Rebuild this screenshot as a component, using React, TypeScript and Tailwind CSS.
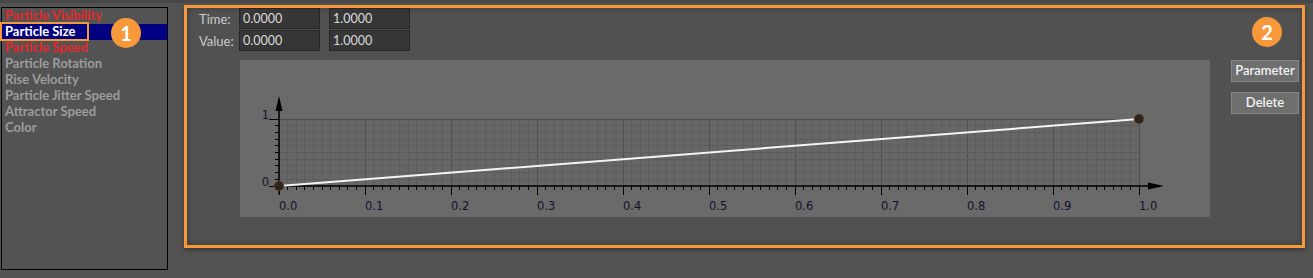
import React from "react";

const LIST_ITEMS = [
  { label: "Particle Visibility", tone: "red" },
  { label: "Particle Size", tone: "selected" },
  { label: "Particle Speed", tone: "red" },
  { label: "Particle Rotation", tone: "gray" },
  { label: "Rise Velocity", tone: "gray" },
  { label: "Particle Jitter Speed", tone: "gray" },
  { label: "Attractor Speed", tone: "gray" },
  { label: "Color", tone: "gray" },
];

const ORIGIN_X = 39;
const ORIGIN_Y = 126;
const PLOT_W = 860;
const PLOT_H = 67;
const MINOR_X = PLOT_W / 100;
const MINOR_Y = PLOT_H / 10;

function CurveChart() {
  const xMinor = Array.from({ length: 101 }, (_, i) => i);
  const yMinor = Array.from({ length: 11 }, (_, j) => j);
  const labels = Array.from({ length: 11 }, (_, i) => (i / 10).toFixed(1));

  return (
    <svg width="970" height="157" viewBox="0 0 970 157" className="block">
      <rect x={ORIGIN_X} y={ORIGIN_Y - PLOT_H} width={PLOT_W} height={PLOT_H} fill="#666666" />
      {xMinor.map((i) => {
        const x = ORIGIN_X + i * MINOR_X;
        return (
          <line
            key={`gx${i}`}
            x1={x}
            x2={x}
            y1={ORIGIN_Y - PLOT_H}
            y2={ORIGIN_Y}
            stroke={i % 10 === 0 ? "#4f4f4f" : "#5c5c5c"}
            strokeWidth="1"
            shapeRendering="crispEdges"
          />
        );
      })}
      {yMinor.map((j) => {
        const y = ORIGIN_Y - j * MINOR_Y;
        return (
          <line
            key={`gy${j}`}
            x1={ORIGIN_X}
            x2={ORIGIN_X + PLOT_W}
            y1={y}
            y2={y}
            stroke={j === 10 ? "#4f4f4f" : "#5c5c5c"}
            strokeWidth="1"
            shapeRendering="crispEdges"
          />
        );
      })}

      {/* x axis + ticks */}
      <line x1={ORIGIN_X} x2={908} y1={ORIGIN_Y} y2={ORIGIN_Y} stroke="#000" strokeWidth="1.5" />
      {xMinor.map((i) => {
        const x = ORIGIN_X + i * MINOR_X;
        return (
          <line
            key={`tx${i}`}
            x1={x}
            x2={x}
            y1={ORIGIN_Y}
            y2={ORIGIN_Y + (i % 10 === 0 ? 9 : 4)}
            stroke="#000"
            strokeWidth="1"
            shapeRendering="crispEdges"
          />
        );
      })}
      <polygon points="908,122.5 924,126 908,129.5" fill="#000" />

      {/* y axis + ticks */}
      <line x1={ORIGIN_X} x2={ORIGIN_X} y1={ORIGIN_Y + 8} y2={48} stroke="#000" strokeWidth="1.5" />
      {yMinor.map((j) => {
        const y = ORIGIN_Y - j * MINOR_Y;
        const major = j === 0 || j === 10;
        return (
          <line
            key={`ty${j}`}
            x1={ORIGIN_X - (major ? 10 : 4)}
            x2={ORIGIN_X}
            y1={y}
            y2={y}
            stroke="#000"
            strokeWidth="1"
            shapeRendering="crispEdges"
          />
        );
      })}
      <polygon points="35.5,51 39,36 42.5,51" fill="#000" />

      {labels.map((t, i) => (
        <text
          key={t}
          x={ORIGIN_X + i * MINOR_X * 10}
          y={150}
          fontSize="11.5"
          fontFamily="'DejaVu Sans', sans-serif"
          fill="#12122c"
        >
          {t}
        </text>
      ))}
      <text x={29} y={59} fontSize="11.5" textAnchor="end" fontFamily="'DejaVu Sans', sans-serif" fill="#12122c">
        1
      </text>
      <text x={29} y={126} fontSize="11.5" textAnchor="end" fontFamily="'DejaVu Sans', sans-serif" fill="#12122c">
        0
      </text>

      {/* curve */}
      <line x1={ORIGIN_X} y1={ORIGIN_Y} x2={ORIGIN_X + PLOT_W} y2={ORIGIN_Y - PLOT_H} stroke="#f4f4f4" strokeWidth="2" />
      {[
        [ORIGIN_X, ORIGIN_Y],
        [ORIGIN_X + PLOT_W, ORIGIN_Y - PLOT_H],
      ].map(([cx, cy]) => (
        <circle key={cx} cx={cx} cy={cy} r="5" fill="#2c241d" stroke="#8a6840" strokeWidth="1" strokeDasharray="1.5 1" />
      ))}
    </svg>
  );
}

function NumberField({ value }: { value: string }) {
  return (
    <div className="w-[81px] h-[21px] bg-[#363636] border border-[#262626] pl-[3px] text-[12.5px] leading-[19px] text-[#dadada]">
      {value}
    </div>
  );
}

export default function App() {
  return (
    <div className="relative w-[1313px] h-[278px] bg-[#535353] flex flex-col font-['Lato',sans-serif] overflow-hidden">
      <div className="h-[3px] bg-[#474747]" />
      <div className="flex items-start">
        {/* curve list */}
        <div className="ml-[1px] mt-[4px] w-[167px] h-[263px] border border-black">
          {LIST_ITEMS.map((item) => (
            <div
              key={item.label}
              className={`h-[16px] leading-[15px] pl-[3px] text-[13px] font-bold whitespace-nowrap ${
                item.tone === "selected"
                  ? "bg-[#000080] text-white"
                  : item.tone === "red"
                  ? "text-[#e5282a]"
                  : "text-[#9c9c9c]"
              }`}
            >
              {item.label}
            </div>
          ))}
        </div>

        {/* curve editor */}
        <div className="ml-[16px] mt-[2px] w-[1121px] h-[243px] border-[3px] border-[#f7993b] bg-[#515151] shadow-[inset_0_0_6px_rgba(0,0,0,0.3),0_2px_4px_rgba(0,0,0,0.35)] flex">
          <div className="w-[1023px] flex flex-col">
            {[
              ["Time:", "0.0000", "1.0000"],
              ["Value:", "0.0000", "1.0000"],
            ].map(([label, a, b]) => (
              <div key={label} className="flex items-center">
                <div className="w-[52px] pl-[12px] pt-[2px] text-[13px] text-[#cacaca]">{label}</div>
                <NumberField value={a} />
                <div className="w-[9px]" />
                <NumberField value={b} />
              </div>
            ))}
            <div className="mt-[9px] ml-[53px] w-[970px] h-[157px] bg-[#6a6a6a]">
              <CurveChart />
            </div>
          </div>
          <div className="ml-[21px] mt-[52px] flex flex-col gap-[10px]">
            <button className="w-[68px] h-[22px] bg-[#6f6f6f] border border-[#878787] text-[13px] font-semibold text-[#f2f2f2]">
              Parameter
            </button>
            <button className="w-[68px] h-[22px] bg-[#6f6f6f] border border-[#878787] text-[13px] font-semibold text-[#f2f2f2]">
              Delete
            </button>
          </div>
        </div>
      </div>

      {/* annotations */}
      <div className="absolute left-0 top-[22px] w-[89px] h-[19px] border-2 border-[#f7993b]" />
      <div className="absolute left-[111px] top-[18px] w-[30px] h-[30px] rounded-full bg-[#f7993b] flex items-center justify-center text-white text-[20px] font-bold">
        1
      </div>
      <div className="absolute left-[1252px] top-[17px] w-[30px] h-[30px] rounded-full bg-[#f7993b] flex items-center justify-center text-white text-[20px] font-bold">
        2
      </div>
    </div>
  );
}
